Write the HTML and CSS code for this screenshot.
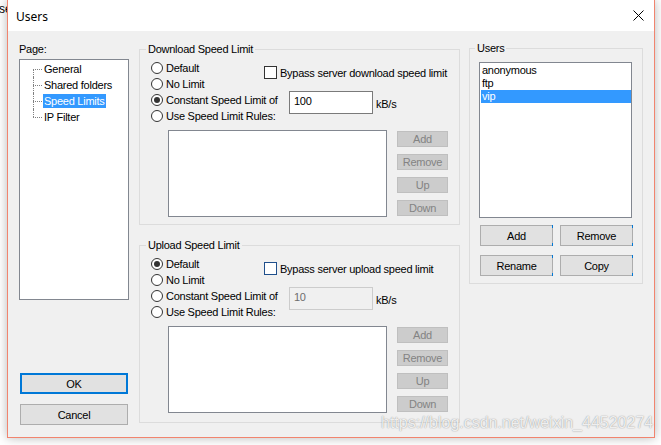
FILE: index.html
```html
<!DOCTYPE html>
<html lang="en">
<head>
  <meta charset="UTF-8" />
  <title>Users</title>
  <link rel="stylesheet" href="styles.css">
</head>
<body>
  <p class="behind">se</p>

  <div class="window">
    <div class="titlebar">
      <span class="title">Users</span>
      <svg class="close" width="11" height="11" viewBox="0 0 11 11">
        <path d="M0.5 0.5 L10.5 10.5 M10.5 0.5 L0.5 10.5" stroke="#000" stroke-width="1" fill="none" />
      </svg>
    </div>

    <div class="dialog">
      <!-- === PAGE TREE === -->
      <div class="col-pages">
        <div class="label">Page:</div>
        <ul class="tree">
          <li><span>General</span></li>
          <li><span>Shared folders</span></li>
          <li><span class="sel">Speed Limits</span></li>
          <li><span>IP Filter</span></li>
        </ul>
        <button class="btn ok">OK</button>
        <button class="btn cancel">Cancel</button>
      </div>

      <!-- === SPEED LIMITS === -->
      <div class="col-limits">
        <div class="group download">
          <div class="group-title">Download Speed Limit</div>
          <div class="limit-top">
            <div class="radios">
              <label class="radio"><span class="dot"></span>Default</label>
              <label class="radio"><span class="dot"></span>No Limit</label>
              <label class="radio"><span class="dot on"></span>Constant Speed Limit of</label>
              <label class="radio"><span class="dot"></span>Use Speed Limit Rules:</label>
            </div>
            <div class="options">
              <label class="check"><span class="box"></span>Bypass server download speed limit</label>
              <div class="speed">
                <input class="field" type="text" value="100">
                <span class="unit">kB/s</span>
              </div>
            </div>
          </div>
          <div class="rules">
            <div class="rule-list"></div>
            <div class="rule-btns">
              <button class="btn small" disabled>Add</button>
              <button class="btn small" disabled>Remove</button>
              <button class="btn small" disabled>Up</button>
              <button class="btn small" disabled>Down</button>
            </div>
          </div>
        </div>

        <div class="group upload">
          <div class="group-title">Upload Speed Limit</div>
          <div class="limit-top">
            <div class="radios">
              <label class="radio"><span class="dot on"></span>Default</label>
              <label class="radio"><span class="dot"></span>No Limit</label>
              <label class="radio"><span class="dot"></span>Constant Speed Limit of</label>
              <label class="radio"><span class="dot"></span>Use Speed Limit Rules:</label>
            </div>
            <div class="options">
              <label class="check"><span class="box hover"></span>Bypass server upload speed limit</label>
              <div class="speed">
                <input class="field" type="text" value="10" disabled>
                <span class="unit">kB/s</span>
              </div>
            </div>
          </div>
          <div class="rules">
            <div class="rule-list"></div>
            <div class="rule-btns">
              <button class="btn small" disabled>Add</button>
              <button class="btn small" disabled>Remove</button>
              <button class="btn small" disabled>Up</button>
              <button class="btn small" disabled>Down</button>
            </div>
          </div>
        </div>
      </div>

      <!-- === USERS === -->
      <div class="col-users">
        <div class="group users">
          <div class="group-title">Users</div>
          <ul class="user-list">
            <li>anonymous</li>
            <li>ftp</li>
            <li class="sel">vip</li>
          </ul>
          <div class="user-btns">
            <button class="btn user">Add</button>
            <button class="btn user">Remove</button>
            <button class="btn user">Rename</button>
            <button class="btn user">Copy</button>
          </div>
        </div>
      </div>
    </div>
  </div>

  <div class="watermark">https://blog.csdn.net/weixin_44520274</div>
</body>
</html>
```

FILE: styles.css
```css
body {
  margin: 0;
  background: #ffffff;
  font-family: 'Liberation Sans', Arial, sans-serif;
  font-size: 11px;
  letter-spacing: -0.25px;
  color: #000;
}

.behind {
  margin: 2px 0 0 -1px;
  font-size: 12px;
  line-height: 14px;
  letter-spacing: 0;
}

/* === WINDOW === */
.window {
  position: absolute;
  left: 7px;
  top: 0;
  width: 646px;
  height: 437px;
  border: 1px solid #f1846e;
  border-top: none;
  background: #f0f0f0;
  box-shadow: 0 0 10px rgba(0, 0, 0, 0.28);
  display: flex;
  flex-direction: column;
}

.titlebar {
  height: 31px;
  flex: none;
  background: #ffffff;
  display: flex;
  align-items: center;
  justify-content: space-between;
  padding: 0 10px 0 8px;
}

.title {
  font-family: 'Noto Sans', sans-serif;
  font-size: 12px;
  letter-spacing: 0;
  margin-top: 1px;
}

.close {
  display: block;
}

.dialog {
  flex: 1;
  display: flex;
  padding: 12px 11px;
}

/* === BUTTONS === */
.btn {
  font: inherit;
  letter-spacing: inherit;
  color: #000;
  background: #e1e1e1;
  border: 1px solid #adadad;
  padding: 0;
  box-sizing: border-box;
}

.btn.small {
  width: 51px;
  height: 16px;
  line-height: 14px;
  background: #cccccc;
  border-color: #bfbfbf;
  color: #838383;
}

/* === PAGE TREE === */
.col-pages {
  width: 110px;
  display: flex;
  flex-direction: column;
}

.label {
  line-height: 13px;
}

.tree {
  list-style: none;
  margin: 3px 0 0;
  padding: 1px 0 0;
  height: 241px;
  box-sizing: border-box;
  background: #fff;
  border: 1px solid #828790;
}

.tree li {
  position: relative;
  height: 16px;
  padding-left: 23px;
}

.tree li span {
  display: inline-block;
  margin-top: 1px;
  padding: 0 1px;
  line-height: 14px;
}

.tree li span.sel {
  background: #3399ff;
  color: #fff;
}

.tree li::before {
  content: '';
  position: absolute;
  left: 13px;
  top: 8px;
  width: 9px;
  border-top: 1px dotted #808080;
}

.tree li::after {
  content: '';
  position: absolute;
  left: 13px;
  top: 0;
  height: 16px;
  border-left: 1px dotted #808080;
}

.tree li:first-child::after {
  top: 8px;
  height: 8px;
}

.tree li:last-child::after {
  height: 8px;
}

.ok {
  margin: auto 1px 0;
  height: 21px;
  border: 2px solid #0078d7;
}

.cancel {
  margin: 10px 1px 0;
  height: 21px;
}

/* === GROUPS === */
.group {
  border: 1px solid #dcdcdc;
  box-sizing: border-box;
}

.group-title {
  display: table;
  margin: -7px 0 0 6px;
  padding: 0 2px;
  line-height: 13px;
  background: #f0f0f0;
}

.col-limits {
  width: 321px;
  margin-left: 10px;
  padding-top: 6px;
}

.download {
  height: 176px;
}

.upload {
  height: 178px;
  margin-top: 20px;
}

.limit-top {
  display: flex;
  margin-top: 4px;
  padding-left: 11px;
}

.radios {
  width: 113px;
}

.radio {
  display: flex;
  align-items: center;
  height: 16px;
  white-space: nowrap;
}

.dot {
  width: 12px;
  height: 12px;
  box-sizing: border-box;
  border: 1px solid #333;
  border-radius: 50%;
  background: #fff;
  margin-right: 3px;
  display: flex;
  align-items: center;
  justify-content: center;
  flex: none;
}

.dot.on::after {
  content: '';
  width: 6px;
  height: 6px;
  border-radius: 50%;
  background: #333;
}

.options {
  display: flex;
  flex-direction: column;
}

.check {
  display: flex;
  align-items: center;
  height: 13px;
  margin-top: 6px;
  white-space: nowrap;
}

.box {
  width: 13px;
  height: 13px;
  box-sizing: border-box;
  border: 1px solid #333;
  background: #fff;
  margin-right: 3px;
  flex: none;
}

.box.hover {
  border-color: #1f4f8c;
}

.speed {
  display: flex;
  align-items: center;
  margin: 12px 0 0 25px;
}

.field {
  width: 84px;
  height: 23px;
  box-sizing: border-box;
  border: 1px solid #7a7a7a;
  background: #fff;
  padding: 0 0 3px 4px;
  margin: 0;
  font: inherit;
  letter-spacing: inherit;
  color: #000;
  outline: none;
}

.field:disabled {
  background: #f0f0f0;
  border-color: #cccccc;
  color: #6d6d6d;
}

.unit {
  margin: 2px 0 0 3px;
}

.rules {
  display: flex;
  margin-top: 6px;
  padding-left: 28px;
}

.rule-list {
  width: 219px;
  height: 87px;
  box-sizing: border-box;
  border: 1px solid #828790;
  background: #fff;
}

.rule-btns {
  display: flex;
  flex-direction: column;
  gap: 7px;
  margin-left: 10px;
  padding-top: 1px;
}

/* === USERS === */
.col-users {
  width: 174px;
  margin-left: 9px;
  padding-top: 5px;
}

.users {
  height: 236px;
}

.users .group-title {
  margin-left: 5px;
}

.user-list {
  list-style: none;
  margin: 7px 0 0 9px;
  padding: 1px 0 0 1px;
  width: 153px;
  height: 156px;
  box-sizing: border-box;
  border: 1px solid #828790;
  background: #fff;
}

.user-list li {
  line-height: 13px;
  padding-left: 1px;
}

.user-list li.sel {
  background: #3399ff;
  color: #fff;
}

.user-btns {
  display: grid;
  grid-template-columns: 73px 73px;
  column-gap: 7px;
  row-gap: 9px;
  margin: 7px 0 0 10px;
}

.btn.user {
  position: relative;
  height: 21px;
}

.btn.user::before,
.btn.user::after {
  content: '';
  position: absolute;
  right: -1px;
  width: 1px;
  height: 3px;
  background: #0078d7;
}

.btn.user::before {
  top: -1px;
}

.btn.user::after {
  bottom: -1px;
}

/* === WATERMARK === */
.watermark {
  position: absolute;
  left: 381px;
  top: 414px;
  font-size: 16px;
  letter-spacing: 0;
  color: rgba(255, 255, 255, 0.85);
  text-shadow: 0 0 1px rgba(0, 0, 0, 0.35), 0 0 2px rgba(0, 0, 0, 0.15);
}
```
